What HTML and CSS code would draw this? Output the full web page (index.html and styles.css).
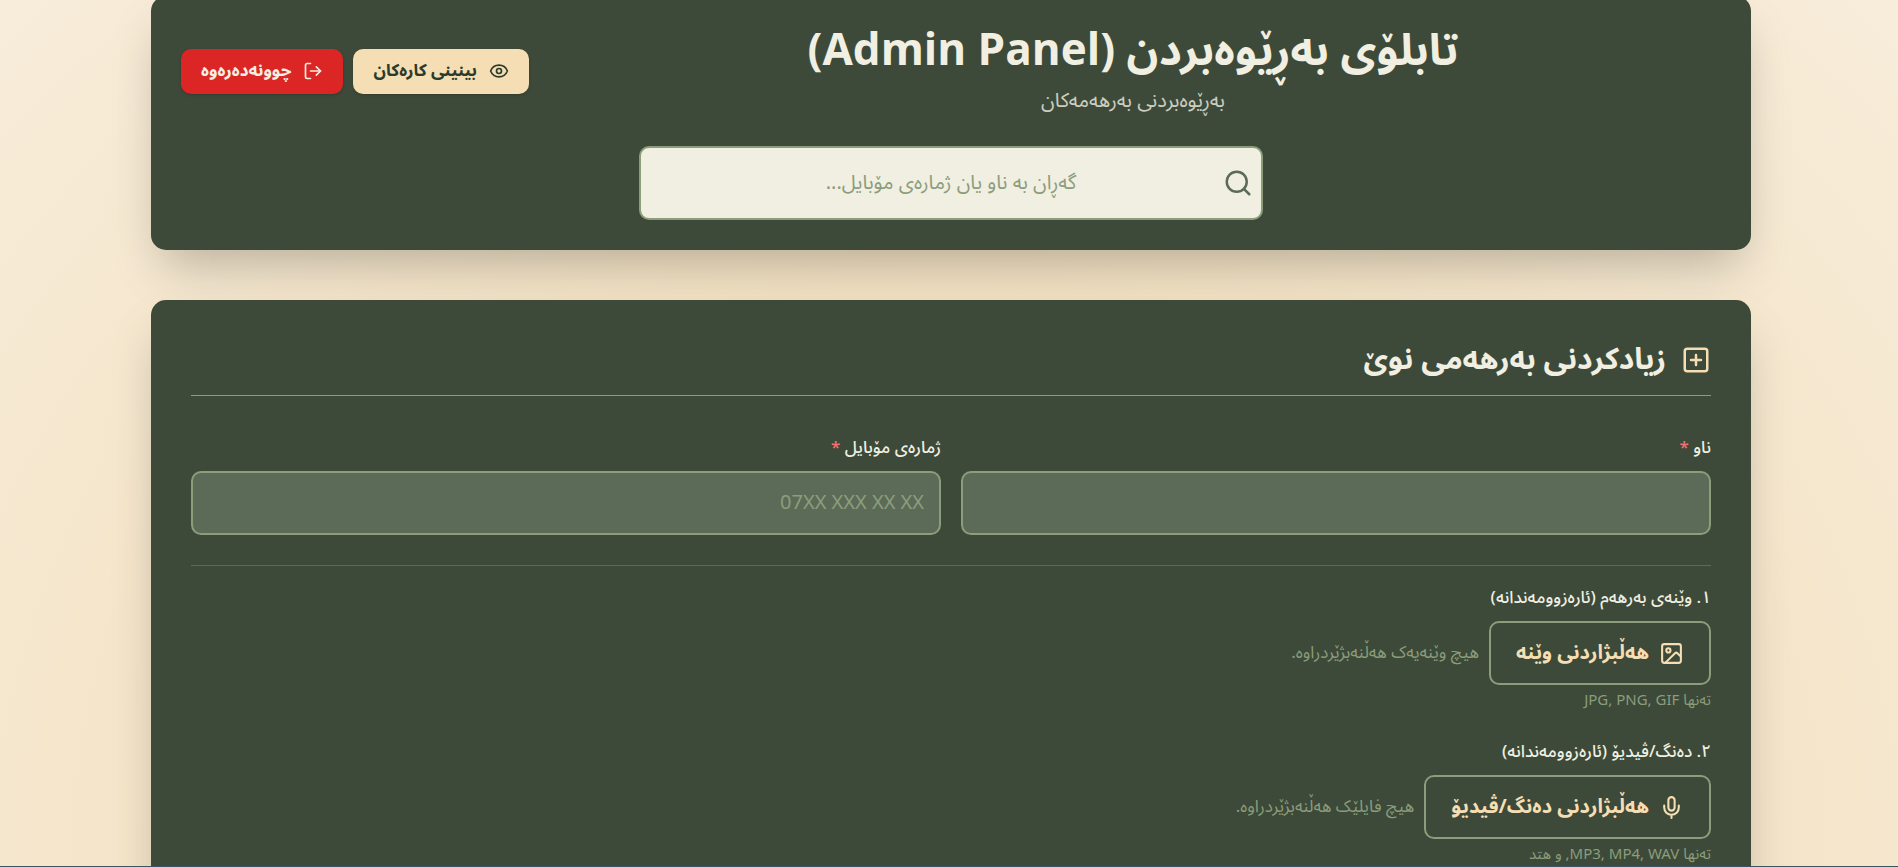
FILE: index.html
```html
<!DOCTYPE html>
<html lang="ckb" dir="rtl">
<head>
    <meta charset="UTF-8">
    <meta name="viewport" content="width=device-width, initial-scale=1.0">
    <title>تابلۆی بەڕێوەبردن</title>
    <link rel="stylesheet" href="styles.css">
</head>
<body>

    <div class="container">
        <header class="card header">
            <div class="header-top">
                <div class="header-title">
                    <h1>تابلۆی بەڕێوەبردن (Admin Panel)</h1>
                    <p>بەڕێوەبردنی بەرهەمەکان</p>
                </div>
                <div class="header-actions">
                    <a href="#" class="btn btn-view">
                        <svg class="icon-small" viewBox="0 0 24 24"><path d="M2.06 12.35a1 1 0 0 1 0-.7 10.75 10.75 0 0 1 19.88 0 1 1 0 0 1 0 .7 10.75 10.75 0 0 1-19.88 0"/><circle cx="12" cy="12" r="3"/></svg>
                        <span>بینینی کارەکان</span>
                    </a>
                    <button type="button" class="btn btn-logout">
                        <svg class="icon-small" viewBox="0 0 24 24"><path d="M9 21H5a2 2 0 0 1-2-2V5a2 2 0 0 1 2-2h4"/><path d="m16 17 5-5-5-5"/><path d="M21 12H9"/></svg>
                        <span>چوونەدەرەوە</span>
                    </button>
                </div>
            </div>
            <div class="search-box">
                <input type="text" id="search" aria-label="گەڕان" placeholder="گەڕان بە ناو یان ژمارەی مۆبایل...">
                <svg class="search-icon" viewBox="0 0 24 24"><circle cx="11" cy="11" r="8"/><path d="m21 21-4.3-4.3"/></svg>
            </div>
        </header>

        <main class="card form-card">
            <h2>
                <svg class="icon-large" viewBox="0 0 24 24"><rect x="3" y="3" width="18" height="18" rx="2"/><path d="M8 12h8M12 8v8"/></svg>
                <span>زیادکردنی بەرهەمی نوێ</span>
            </h2>
            <form>
                <div class="form-grid">
                    <div class="field">
                        <label for="name">ناو <span class="required">*</span></label>
                        <input type="text" id="name">
                    </div>
                    <div class="field">
                        <label for="phone">ژمارەی مۆبایل <span class="required">*</span></label>
                        <input type="tel" id="phone" placeholder="07XX XXX XX XX">
                    </div>
                </div>

                <div class="uploads">
                    <div class="field">
                        <label for="imageButton">١. وێنەی بەرهەم (ئارەزوومەندانە)</label>
                        <div class="upload-row">
                            <button type="button" class="btn-upload" id="imageButton">
                                <svg class="icon" viewBox="0 0 24 24"><rect x="3" y="3" width="18" height="18" rx="2"/><circle cx="9" cy="9" r="2"/><path d="M21 15l-3.1-3.1a2 2 0 0 0-2.8 0L6 21"/></svg>
                                <span>هەڵبژاردنی وێنە</span>
                            </button>
                            <span class="file-name">هیچ وێنەیەک هەڵنەبژێردراوە.</span>
                        </div>
                        <p class="hint">تەنها JPG, PNG, GIF</p>
                    </div>
                    <div class="field">
                        <label for="mediaButton">٢. دەنگ/ڤیدیۆ (ئارەزوومەندانە)</label>
                        <div class="upload-row">
                            <button type="button" class="btn-upload" id="mediaButton">
                                <svg class="icon" viewBox="0 0 24 24"><path d="M12 2a3 3 0 0 0-3 3v7a3 3 0 0 0 6 0V5a3 3 0 0 0-3-3z"/><path d="M19 10v2a7 7 0 0 1-14 0v-2M12 19v3"/></svg>
                                <span>هەڵبژاردنی دەنگ/ڤیدیۆ</span>
                            </button>
                            <span class="file-name">هیچ فایلێک هەڵنەبژێردراوە.</span>
                        </div>
                        <p class="hint">تەنها MP3, MP4, WAV, و هتد</p>
                    </div>
                </div>
            </form>
        </main>
    </div>

</body>
</html>
```

FILE: styles.css
```css
* {
    box-sizing: border-box;
    margin: 0;
}

html {
    overflow: hidden;
}

body {
    font-family: "Noto Sans Arabic", "Noto Sans", sans-serif;
    font-size: 20px;
    line-height: 30px;
    color: #f0efe2;
    background: radial-gradient(ellipse at bottom, #f0d9ae, #f8eddb) fixed;
    min-height: 100vh;
    padding-left: 4px;
}

/* colored line along the lower window edge */
body::after {
    content: "";
    position: fixed;
    right: 0;
    bottom: 0;
    left: 0;
    height: 1px;
    background: #3d5560;
}

svg {
    flex: none;
    fill: none;
    stroke: currentColor;
    stroke-width: 2;
    stroke-linecap: round;
    stroke-linejoin: round;
}

input,
button {
    font: inherit;
}

.container {
    max-width: 1600px;
    margin: -4px auto 0;
    display: flex;
    flex-direction: column;
    gap: 50px;
}

.card {
    background: #3d4a39;
    border-radius: 15px;
    box-shadow: 0 25px 50px -12px rgba(0, 0, 0, 0.25);
}

.header {
    padding: 30px;
}

.header-top {
    display: flex;
    align-items: center;
    gap: 16px;
    margin-bottom: 30px;
}

.header-title {
    flex: 1;
    text-align: center;
}

.header-title h1 {
    font-size: 44px;
    line-height: 50px;
}

.header-title p {
    line-height: 30px;
    margin-top: 10px;
    opacity: 0.8;
}

.header-actions {
    display: flex;
    gap: 10px;
}

.btn {
    display: flex;
    align-items: center;
    gap: 12px;
    padding: 10px 20px;
    border: none;
    border-radius: 10px;
    box-shadow: 0 1px 3px rgba(0, 0, 0, 0.2);
    font-size: 17px;
    line-height: 25px;
    font-weight: bold;
    text-decoration: none;
    cursor: pointer;
}

.btn-view {
    background: #f5deb3;
    color: #2c3a2c;
}

.btn-logout {
    background: #dc2626;
    color: #f0efe2;
}

.search-box {
    position: relative;
    max-width: 624px;
    margin: 0 auto;
}

.search-box input {
    display: block;
    width: 100%;
    height: 74px;
    padding: 20px;
    text-align: center;
    color: #3d4a39;
    background: #f0efe2;
    border: 2px solid #8b9d7b;
    border-radius: 10px;
}

input::placeholder {
    color: #8b9d7b;
    opacity: 1;
}

.search-icon {
    position: absolute;
    top: 22px;
    right: 10px;
    width: 30px;
    height: 30px;
    color: #5c6b58;
}

.form-card {
    padding: 40px;
}

.form-card h2 {
    display: flex;
    align-items: center;
    gap: 15px;
    padding-bottom: 15px;
    margin-bottom: 40px;
    border-bottom: 1px solid #8b9d7b;
    font-size: 30px;
    line-height: 40px;
}

.form-grid {
    display: grid;
    grid-template-columns: 1fr 1fr;
    gap: 20px;
    padding-bottom: 30px;
    border-bottom: 1px solid #5c6b58;
}

.field label {
    display: block;
    margin-bottom: 10px;
    font-size: 17px;
    line-height: 25px;
    font-weight: 500;
}

.required {
    color: #f87171;
}

.field input {
    display: block;
    width: 100%;
    height: 64px;
    padding: 15px;
    text-align: right;
    color: #f0efe2;
    background: #5c6b58;
    border: 2px solid #8b9d7b;
    border-radius: 10px;
}

.uploads {
    display: flex;
    flex-direction: column;
    gap: 30px;
    padding-top: 20px;
}

.upload-row {
    display: flex;
    align-items: center;
    gap: 10px;
}

.btn-upload {
    display: flex;
    align-items: center;
    gap: 10px;
    height: 64px;
    padding: 0 25px;
    color: #f5deb3;
    background: transparent;
    border: 2px solid #8b9d7b;
    border-radius: 10px;
    font-weight: bold;
    cursor: pointer;
}

.file-name {
    font-size: 17px;
    color: #8b9d7b;
}

.hint {
    margin-top: 5px;
    font-size: 15px;
    line-height: 20px;
    color: #8b9d7b;
}

.icon-small {
    width: 20px;
    height: 20px;
}

.icon {
    width: 25px;
    height: 25px;
}

.icon-large {
    width: 30px;
    height: 30px;
    color: #f5deb3;
}
```
